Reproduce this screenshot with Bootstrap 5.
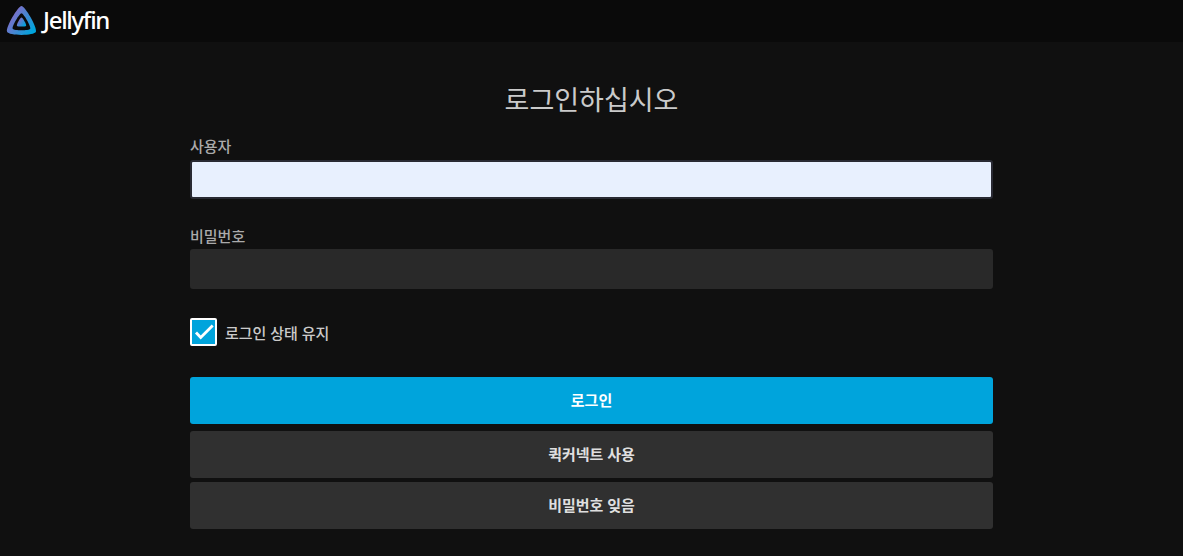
<!DOCTYPE html>
<html lang="ko">
<head>
    <meta charset="UTF-8">
    <meta name="viewport" content="width=device-width, initial-scale=1.0">
    <title>Jellyfin</title>
    <link href="https://cdn.jsdelivr.net/npm/bootstrap@5.3.0/dist/css/bootstrap.min.css" rel="stylesheet">
    <style>
        html, body {
            height: 100%;
        }
        body {
            background: #101010;
            color: rgba(255, 255, 255, 0.8);
            font-family: "Noto Sans", "Noto Sans CJK KR", sans-serif;
            overflow: hidden;
        }
        .jf-header {
            height: 42px;
            background: #0a0a0a;
            padding-left: 5px;
        }
        .jf-logo-text {
            font-family: "Noto Sans", sans-serif;
            font-size: 24px;
            font-weight: 500;
            color: #fff;
            letter-spacing: -1.3px;
            margin-left: 5px;
            margin-bottom: 2px;
            line-height: 1;
        }
        .jf-form {
            width: 803px;
            margin-left: 190px;
        }
        .jf-title {
            font-size: 27px;
            font-weight: 400;
            color: rgba(255, 255, 255, 0.8);
            text-align: center;
            line-height: 36px;
            margin: 40px 0 18px 0;
        }
        .jf-label {
            display: block;
            font-size: 15px;
            font-weight: 500;
            line-height: 20px;
            color: #aaa;
            margin-bottom: 4px;
        }
        .jf-label-tight {
            margin-bottom: 3px;
        }
        .jf-input {
            display: block;
            width: 100%;
            height: 40px;
            border-radius: 3px;
            background: #292929;
            border: 2px solid #292929;
            outline: none;
        }
        .jf-input-filled {
            height: 39px;
            background: #e8f0fe;
            border-color: #292a33;
        }
        .jf-field {
            margin-bottom: 27px;
        }
        .jf-check-row {
            margin: 29px 0 31px 0;
            height: 28px;
        }
        .jf-check {
            width: 27px;
            height: 28px;
            background: #00a4dc;
            border: 2px solid #fff;
            border-radius: 2px;
            margin-right: 8px;
        }
        .jf-check-label {
            font-size: 15px;
            font-weight: 500;
            color: rgba(255, 255, 255, 0.8);
            padding-top: 2px;
        }
        .jf-btn {
            display: block;
            width: 100%;
            height: 47px;
            border: 0;
            border-radius: 3px;
            font-size: 15px;
            font-weight: 700;
            background: #303030;
            color: rgba(255, 255, 255, 0.87);
            padding: 0;
        }
        .jf-btn-primary {
            background: #00a4dc;
            color: #fff;
            margin-bottom: 7px;
        }
        .jf-btn-quick {
            margin-bottom: 4px;
        }
    </style>
</head>
<body>
    <div class="jf-header d-flex align-items-center">
        <svg width="33" height="33" viewBox="0 0 32 32">
            <defs>
                <linearGradient id="jfGrad" x1="0" y1="0" x2="1" y2="0.7">
                    <stop offset="0" stop-color="#aa5cc3"/>
                    <stop offset="1" stop-color="#00a4dc"/>
                </linearGradient>
            </defs>
            <path fill="url(#jfGrad)" fill-rule="evenodd" d="M16 1C12.500 1 .500 22 2 26 3.500 30 28.500 30 30 26 31.500 22 19.500 1 16 1ZM16 8C18 8 25.500 21 24.500 23 23.500 25 8.500 25 7.500 23 6.500 21 14 8 16 8Z"/>
            <path fill="url(#jfGrad)" d="M16 12C14.800 12 11 18.800 11.500 20 12.100 21.200 19.900 21.200 20.500 20 21 18.800 17.200 12 16 12Z"/>
        </svg>
        <span class="jf-logo-text">Jellyfin</span>
    </div>

    <div class="jf-form">
        <h1 class="jf-title">로그인하십시오</h1>
        <div class="jf-field">
            <label class="jf-label" for="txtUser">사용자</label>
            <input class="jf-input jf-input-filled" id="txtUser" type="text">
        </div>
        <div>
            <label class="jf-label jf-label-tight" for="txtPass">비밀번호</label>
            <input class="jf-input" id="txtPass" type="password">
        </div>
        <div class="jf-check-row d-flex align-items-center">
            <div class="jf-check d-flex align-items-center justify-content-center">
                <svg width="21" height="21" viewBox="0 0 21 21"><path d="M3 10.500l4.700 5L19.700 3.500" fill="none" stroke="#fff" stroke-width="2.800"/></svg>
            </div>
            <span class="jf-check-label">로그인 상태 유지</span>
        </div>
        <button class="jf-btn jf-btn-primary" type="button">로그인</button>
        <button class="jf-btn jf-btn-quick" type="button">퀵커넥트 사용</button>
        <button class="jf-btn" type="button">비밀번호 잊음</button>
    </div>
</body>
</html>
